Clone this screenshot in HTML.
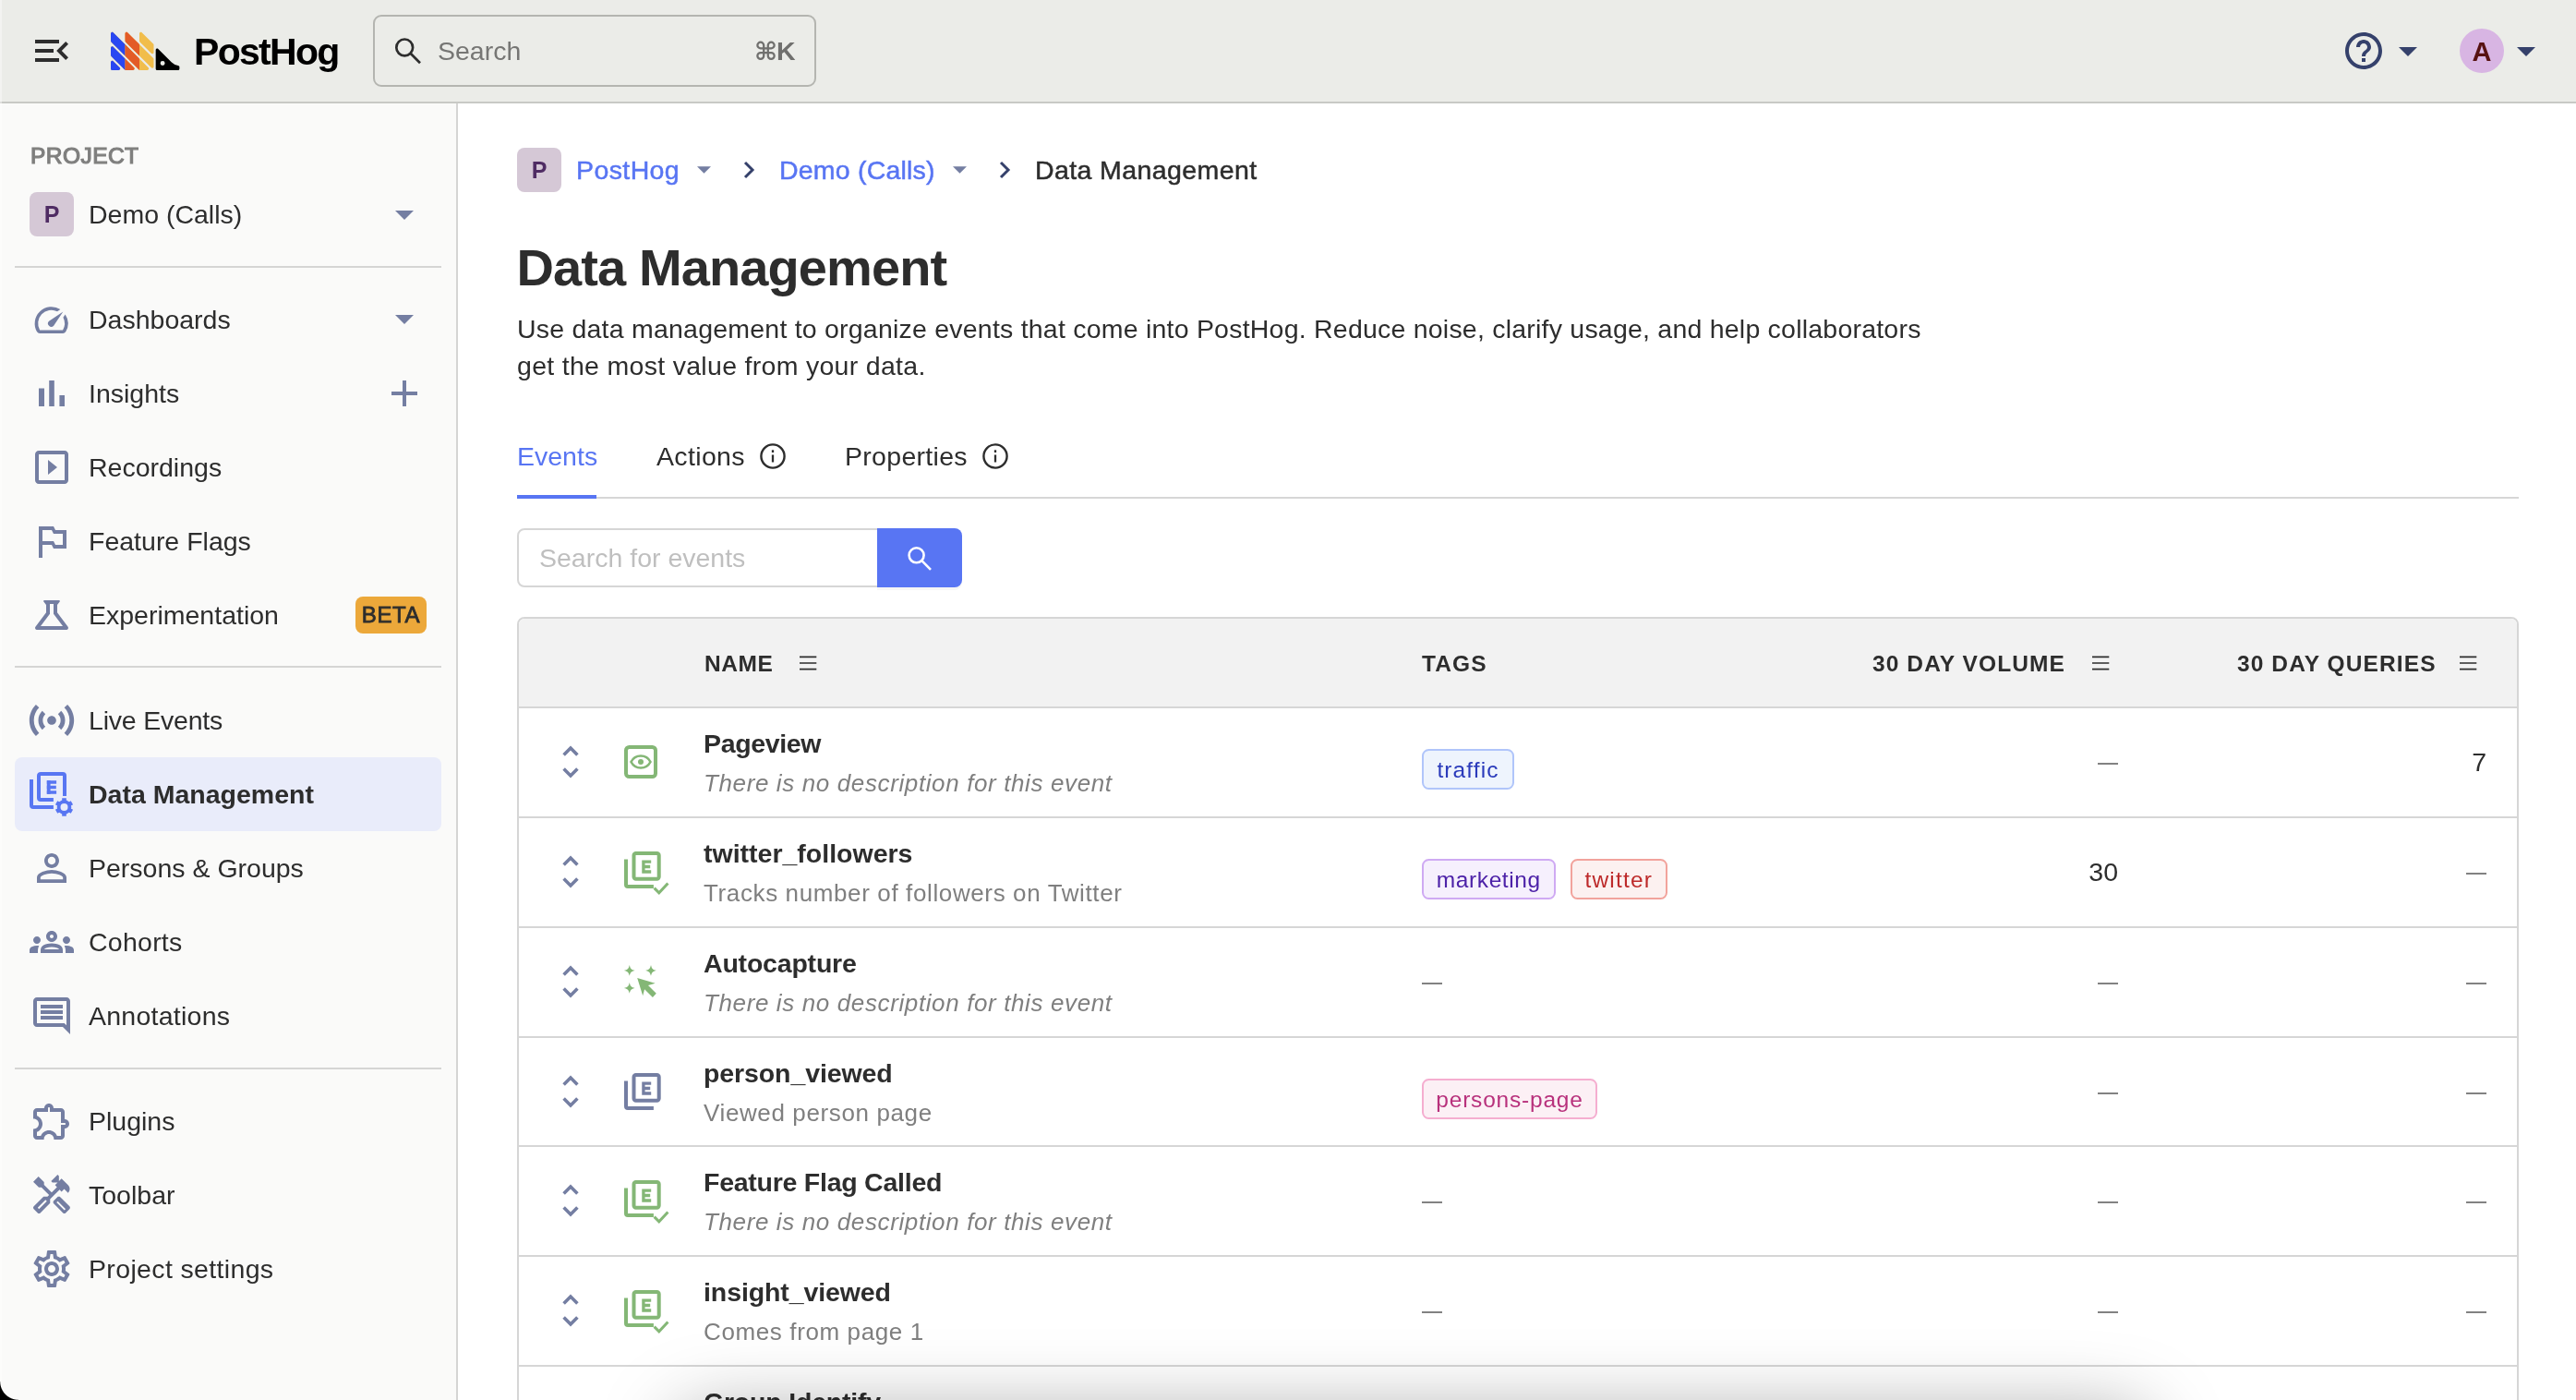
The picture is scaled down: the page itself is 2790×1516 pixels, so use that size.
<!DOCTYPE html>
<html lang="en">
<head>
<meta charset="utf-8">
<title>Data Management • PostHog</title>
<style>
*{box-sizing:border-box;margin:0;padding:0}
html,body{width:2790px;height:1516px;overflow:hidden;background:#fff}
body{position:relative;font-family:"Liberation Sans",Arial,sans-serif;font-size:28.5px;color:#2d2d2d;-webkit-font-smoothing:antialiased}
.abs{position:absolute}
.t{position:absolute;white-space:nowrap;line-height:40px;height:40px;letter-spacing:0}
svg{position:absolute;overflow:visible}
/* header */
#hdr{position:absolute;left:0;top:0;width:2790px;height:112px;background:#ebece8;border-bottom:2px solid #c8c9c5}
#search{position:absolute;left:404px;top:16px;width:480px;height:78px;border:2px solid #b4b5b0;border-radius:9px}
/* sidebar */
#side{position:absolute;left:0;top:112px;width:496px;height:1404px;background:#fafaf9;border-right:2px solid #d5d5d4}
.hr{position:absolute;left:16px;width:462px;height:2px;background:#d5d5d4}
.nav{position:absolute;left:96px;white-space:nowrap;line-height:40px;height:40px;letter-spacing:0}
.sq{position:absolute;width:48px;height:48px;border-radius:8px;background:#d5c8d6;color:#4f2c63;font-weight:700;font-size:25px;line-height:48px;text-align:center}
/* main */
.link{color:#5875f3}
.hrow{position:absolute;left:560px;width:2168px}
#tbl{position:absolute;left:560px;top:668px;width:2168px;height:900px;border:2px solid #d6d6d6;border-radius:8px;background:#fff;overflow:hidden}
#thead{position:absolute;left:0;top:0;width:100%;height:96px;background:#f2f2f2;border-bottom:2px solid #d6d6d6}
.th{position:absolute;top:27px;font-weight:700;font-size:24.5px;letter-spacing:1.1px;line-height:44px;white-space:nowrap;color:#2d2d2d}
.row{position:absolute;left:0;width:100%;height:119px;border-bottom:2px solid #d6d6d6}
.nm{position:absolute;left:200px;top:18px;font-weight:700;line-height:40px;white-space:nowrap;letter-spacing:-.35px}
.ds{position:absolute;left:200px;top:61px;font-size:26px;line-height:40px;white-space:nowrap;color:#7f7f7f;letter-spacing:.62px}
.ds.i{font-style:italic}
.num{position:absolute;line-height:40px;top:38px;text-align:right;white-space:nowrap}
.dash{position:absolute;height:2px;width:22px;background:#828282;top:59px}
.tag{position:absolute;top:44px;height:44px;border:2px solid;border-radius:7.5px;font-size:24.5px;line-height:41px;padding:0;text-align:center;white-space:nowrap;letter-spacing:1px}
.geekblue{color:#2b3bbb;background:#eef4fd;border-color:#b0c5fa}
.purple{color:#4d22a8;background:#f6f0fd;border-color:#cfaaf3}
.red{color:#bd2a2a;background:#fcf1f0;border-color:#f2a39c}
.magenta{color:#b8317c;background:#fcf0f5;border-color:#f5aed0}
</style>
</head>
<body>

<!-- ===================== HEADER ===================== -->
<div id="hdr"></div>
<div id="hdrin" class="abs" style="left:0;top:0;width:2790px;height:112px;will-change:transform">
  <!-- menu toggle -->
  <svg style="left:32px;top:31px" width="48" height="48" viewBox="0 0 24 24" fill="#2d2d2d"><path d="M3 18h13v-2H3v2zm0-5h10v-2H3v2zm0-7v2h13V6H3zm18 9.59L17.42 12 21 8.41 19.59 7l-5 5 5 5L21 15.59z"/></svg>
  <!-- logo mark -->
  <svg id="logo" style="left:119.5px;top:31px" width="77.5" height="46.5" viewBox="0 0 50 30" fill="none">
    <path fill="#f1bd4b" d="M0 8.58V3.41c0-.89 1.08-1.34 1.71-.7l24.58 24.58c.63.63.18 1.7-.71 1.7h-5.17c-.26 0-.52-.1-.7-.29L.29 9.29A1 1 0 0 1 0 8.58zM0 18.58v-5.17c0-.89 1.08-1.34 1.71-.7l14.58 14.58c.63.63.18 1.7-.71 1.7h-5.17c-.26 0-.52-.1-.7-.29L.29 19.29A1 1 0 0 1 0 18.58zM0 23.41c0-.89 1.08-1.34 1.71-.71l4.58 4.59c.63.63.18 1.7-.71 1.7H1a1 1 0 0 1-1-1v-4.58zM10 8.58V3.41c0-.89 1.08-1.34 1.71-.7l17.99 17.99c.19.19.3.44.3.71v5.17c0 .89-1.08 1.33-1.71.7L10.29 9.29a1 1 0 0 1-.29-.71zM21.7 2.71c-.63-.63-1.7-.19-1.7.7v5.17c0 .27.1.52.29.71l8 8c.63.63 1.71.18 1.71-.71v-5.17c0-.26-.11-.52-.3-.7l-8-8z"/>
    <path fill="#000" d="M42.52 23.53l-9.41-9.41c-.63-.63-1.71-.18-1.71.71v13.16a1 1 0 0 0 1 1h14.58a1 1 0 0 0 1-1v-1.2c0-.55-.45-.99-1-1.06a7.74 7.74 0 0 1-4.46-2.2zm-6.32 2.26a1.6 1.6 0 1 1 0-3.2 1.6 1.6 0 0 1 0 3.2z"/>
    <path fill="#2947f2" d="M0 27.99a1 1 0 0 0 1 1h4.58c.89 0 1.34-1.07.71-1.7l-4.58-4.59C1.08 22.07 0 22.52 0 23.41v4.58zM10 11L1.71 2.71C1.08 2.08 0 2.520 0 3.41v5.170c0 .27.11.52.29.71L10 18.99V11zM1.71 12.700C1.080 12.070 0 12.520 0 13.410v5.170c0 .270.110.520.290.710L10 28.990v-8L1.71 12.700z"/>
    <path fill="#e35b27" d="M19.99 11.41c0-.26-.1-.52-.29-.7l-8-8c-.63-.63-1.7-.19-1.7.7v5.17c0 .27.1.52.29.71l9.700 9.700v-7.580zM10 28.990h5.580c.89 0 1.340-1.070.710-1.700L10 20.990v8zM10 11v7.580c0 .270.1.520.29.710l9.700 9.700v-7.580c0-.270-.1-.520-.29-.710L10 11z"/>
  </svg>
  <div class="abs" id="wordmark" style="left:210px;top:31px;height:50px;line-height:50px;font-size:41px;font-weight:700;color:#000;letter-spacing:-1.7px;white-space:nowrap">PostHog</div>
  <!-- search -->
  <div id="search"></div>
  <svg style="left:424px;top:38px" width="36" height="36" viewBox="0 0 36 36" fill="none" stroke="#2d2d2d" stroke-width="2.700"><circle cx="14.2" cy="13.4" r="8.900"/><path d="M20.6 19.8L31 30.2" stroke-linecap="butt"/></svg>
  <div class="t" style="left:474px;top:35px;color:#767674">Search</div>
  <div class="t" style="left:817px;top:35px;color:#70706e;letter-spacing:0;font-weight:700"><span style="font-family:'DejaVu Sans',sans-serif;font-size:27px;font-weight:700;letter-spacing:-1px">⌘</span>K</div>
  <!-- help -->
  <svg style="left:2536px;top:31px" width="48" height="48" viewBox="0 0 24 24" fill="#35416b"><path d="M11 18h2v-2h-2v2zm1-16C6.48 2 2 6.48 2 12s4.48 10 10 10 10-4.48 10-10S17.52 2 12 2zm0 18c-4.41 0-8-3.59-8-8s3.59-8 8-8 8 3.59 8 8-3.59 8-8 8zm0-14c-2.21 0-4 1.79-4 4h2c0-1.1.9-2 2-2s2 .9 2 2c0 2-3 1.750-3 5h2c0-2.250 3-2.500 3-5 0-2.210-1.790-4-4-4z"/></svg>
  <svg style="left:2598px;top:51px" width="20" height="10" viewBox="0 0 20 10" fill="#35416b"><path d="M0 0h20L10 10z"/></svg>
  <div class="abs" style="left:2664px;top:31px;width:48px;height:48px;border-radius:50%;background:#d8b5e3;color:#571212;font-weight:700;font-size:29px;line-height:50px;text-align:center">A</div>
  <svg style="left:2726px;top:51px" width="20" height="10" viewBox="0 0 20 10" fill="#35416b"><path d="M0 0h20L10 10z"/></svg>
</div>

<!-- ===================== SIDEBAR ===================== -->
<div id="side" style="top:112px"></div>
<div id="sidein" class="abs" style="left:0;top:0;width:496px;height:1516px;will-change:transform">
  <div class="abs" style="left:33px;top:151px;height:36px;line-height:36px;font-size:24.5px;font-weight:400;-webkit-text-stroke:1.2px #7f7f7e;letter-spacing:.45px;color:#7f7f7e;white-space:nowrap">PROJECT</div>
  <div class="sq" style="left:32px;top:208px">P</div>
  <div class="nav" style="top:212px">Demo (Calls)</div>
  <svg style="left:428px;top:228px" width="20" height="10" viewBox="0 0 20 10" fill="#747ea2"><path d="M0 0h20L10 10z"/></svg>
  <div class="hr" style="top:288px"></div>

  <!-- Dashboards -->
  <svg style="left:34.4px;top:324.8px" width="43.2" height="43.2" viewBox="0 0 24 24" fill="#747ea2"><path d="M20.38 8.57l-1.23 1.85a8 8 0 0 1-.22 7.58H5.07A8 8 0 0 1 15.58 6.85l1.85-1.23A10 10 0 0 0 3.35 19a2 2 0 0 0 1.72 1h13.85a2 2 0 0 0 1.74-1 10 10 0 0 0-.27-10.44zm-9.79 6.84a2 2 0 0 0 2.83 0l5.66-8.49-8.49 5.66a2 2 0 0 0 0 2.83z"/></svg>
  <div class="nav" style="top:326px">Dashboards</div>
  <svg style="left:428px;top:341px" width="20" height="10" viewBox="0 0 20 10" fill="#747ea2"><path d="M0 0h20L10 10z"/></svg>
  <!-- Insights -->
  <svg style="left:32px;top:402px" width="48" height="48" viewBox="0 0 24 24" fill="#747ea2"><path d="M5 9.2h3V19H5zM10.6 5h2.8v14h-2.8zm5.6 8H19v6h-2.8z"/></svg>
  <div class="nav" style="top:406px">Insights</div>
  <svg style="left:414px;top:402px" width="48" height="48" viewBox="0 0 24 24" fill="#747ea2"><path d="M19 13h-6v6h-2v-6H5v-2h6V5h2v6h6v2z"/></svg>
  <!-- Recordings -->
  <svg style="left:32px;top:482px" width="48" height="48" viewBox="0 0 24 24" fill="#747ea2"><path d="M10 8v8l5-4-5-4zm9-5H5c-1.100 0-2 .9-2 2v14c0 1.100.9 2 2 2h14c1.100 0 2-.9 2-2V5c0-1.100-.9-2-2-2zm0 16H5V5h14v14z"/></svg>
  <div class="nav" style="top:486px">Recordings</div>
  <!-- Feature Flags -->
  <svg style="left:32px;top:562px" width="48" height="48" viewBox="0 0 24 24" fill="#747ea2"><path d="M14 6l-1-2H5v17h2v-7h5l1 2h7V6h-6zm4 8h-4l-1-2H7V6h5l1 2h5v6z"/></svg>
  <div class="nav" style="top:566px">Feature Flags</div>
  <!-- Experimentation -->
  <svg style="left:32px;top:642px" width="48" height="48" viewBox="0 0 24 24" fill="#747ea2"><path d="M13 11.330L18 18H6l5-6.670V6h2m2.960-2H8.040c-.42 0-.65.48-.39.81L9 6.500v4.170L3.200 18.400c-.49.66-.02 1.600.8 1.600h16c.82 0 1.290-.94.8-1.600L15 10.670V6.500l1.350-1.690c.26-.33.03-.81-.39-.81z"/></svg>
  <div class="nav" style="top:646px">Experimentation</div>
  <div class="abs" style="left:385px;top:646px;width:77px;height:40px;border-radius:8px;background:#eca83a;color:#2d2d2d;font-weight:400;-webkit-text-stroke:.8px #2d2d2d;font-size:24px;line-height:40px;text-align:center;letter-spacing:.6px">BETA</div>
  <div class="hr" style="top:721px"></div>

  <!-- Live Events -->
  <svg style="left:27px;top:751px" width="58" height="58" viewBox="0 0 24 24" fill="#747ea2"><path d="M7.760 16.240C6.670 15.160 6 13.660 6 12s.67-3.160 1.760-4.240l1.420 1.420C8.450 9.900 8 10.900 8 12c0 1.100.45 2.100 1.170 2.830l-1.410 1.410zm8.480 0C17.330 15.160 18 13.660 18 12s-.67-3.160-1.760-4.240l-1.420 1.420C15.550 9.900 16 10.900 16 12c0 1.100-.45 2.100-1.170 2.830l1.410 1.410zM12 10c-1.100 0-2 .9-2 2s.9 2 2 2 2-.9 2-2-.9-2-2-2zm8 2c0 2.210-.9 4.210-2.350 5.650l1.420 1.420C20.880 17.260 22 14.760 22 12s-1.120-5.260-2.930-7.070l-1.420 1.420C19.100 7.790 20 9.790 20 12zM6.350 6.350L4.930 4.930C3.120 6.740 2 9.240 2 12s1.120 5.260 2.930 7.070l1.420-1.420C4.900 16.210 4 14.210 4 12s.9-4.210 2.350-5.650z"/></svg>
  <div class="nav" style="top:760px;letter-spacing:-.2px">Live Events</div>
  <!-- Data Management (active) -->
  <div class="abs" style="left:16px;top:820px;width:462px;height:80px;border-radius:8px;background:#e9ecfa"></div>
  <svg style="left:31px;top:835px" width="50" height="50" viewBox="0 0 25 25" fill="none" stroke="#5876f2" stroke-width="2"><path d="M1.5 4.500V18.500a1 1 0 0 0 1 1H13.450"/><path d="M19.500 13.500V2.450a1 1 0 0 0-1-1H6.500a1 1 0 0 0-1 1V14.450a1 1 0 0 0 1 1H13.450"/><path d="M10.850 5.100V12.400" stroke-width="1.900"/><path d="M9.900 5.980H15.050M9.900 8.750H14.900M9.900 11.520H15.050" stroke-width="1.750"/><circle cx="19.250" cy="19.500" r="2.950" stroke-width="1.900"/><path d="M19.25 16.20L19.25 14.65M16.39 17.85L15.05 17.07M16.39 21.15L15.05 21.93M19.25 22.80L19.25 24.35M22.11 21.15L23.45 21.93M22.11 17.85L23.45 17.07" stroke-width="2.300"/></svg>
  <div class="nav" style="top:840px;font-weight:700;letter-spacing:0">Data Management</div>
  <!-- Persons & Groups -->
  <svg style="left:32px;top:916px" width="48" height="48" viewBox="0 0 24 24" fill="#747ea2"><path d="M12 5.900c1.160 0 2.100.94 2.100 2.100s-.94 2.100-2.100 2.100S9.900 9.160 9.900 8s.94-2.100 2.100-2.100m0 9c2.970 0 6.100 1.460 6.100 2.100v1.100H5.900V17c0-.64 3.130-2.100 6.100-2.100M12 4C9.790 4 8 5.790 8 8s1.790 4 4 4 4-1.790 4-4-1.790-4-4-4zm0 9c-2.670 0-8 1.340-8 4v3h16v-3c0-2.660-5.330-4-8-4z"/></svg>
  <div class="nav" style="top:920px">Persons &amp; Groups</div>
  <!-- Cohorts -->
  <svg style="left:32px;top:996px" width="48" height="48" viewBox="0 0 24 24" fill="#747ea2"><path d="M4 13c1.100 0 2-.9 2-2s-.9-2-2-2-2 .9-2 2 .9 2 2 2zm1.130 1.100c-.37-.06-.74-.1-1.130-.1-.99 0-1.930.21-2.780.58C.48 14.900 0 15.620 0 16.430V18h4.500v-1.610c0-.83.23-1.610.63-2.290zM20 13c1.100 0 2-.9 2-2s-.9-2-2-2-2 .9-2 2 .9 2 2 2zm4 3.430c0-.81-.48-1.530-1.220-1.850-.85-.37-1.790-.58-2.780-.58-.39 0-.76.04-1.130.1.4.68.63 1.460.63 2.290V18H24v-1.570zm-7.760-2.780c-1.170-.52-2.610-.9-4.240-.9-1.630 0-3.070.39-4.240.9C6.680 14.130 6 15.210 6 16.390V18h12v-1.610c0-1.180-.68-2.260-1.760-2.740zM8.070 16c.09-.23.13-.39.91-.69.97-.38 1.990-.56 3.020-.56s2.050.18 3.020.56c.77.3.81.46.91.69H8.070zM12 8c.55 0 1 .45 1 1s-.45 1-1 1-1-.45-1-1 .45-1 1-1m0-2c-1.660 0-3 1.340-3 3s1.340 3 3 3 3-1.340 3-3-1.340-3-3-3z"/></svg>
  <div class="nav" style="top:1000px;letter-spacing:.25px">Cohorts</div>
  <!-- Annotations -->
  <svg style="left:32px;top:1076px" width="48" height="48" viewBox="0 0 24 24" fill="#747ea2"><path d="M21.990 4c0-1.100-.89-2-1.990-2H4c-1.100 0-2 .9-2 2v12c0 1.100.9 2 2 2h14l4 4-.01-18zM20 4v13.170L18.830 16H4V4h16zM6 12h12v2H6zm0-3h12v2H6zm0-3h12v2H6z"/></svg>
  <div class="nav" style="top:1080px;letter-spacing:.25px">Annotations</div>
  <div class="hr" style="top:1156px"></div>

  <!-- Plugins -->
  <svg style="left:32px;top:1190px" width="48" height="48" viewBox="0 0 24 24" fill="#747ea2"><path d="M10.500 4.500c.28 0 .5.22.5.5v2h6v6h2c.28 0 .5.22.5.5s-.22.5-.5.5h-2v6h-2.120c-.68-1.750-2.390-3-4.380-3s-3.700 1.250-4.380 3H4v-2.120c1.750-.68 3-2.390 3-4.380 0-1.990-1.240-3.700-2.990-4.380L4 7h6V5c0-.28.22-.5.5-.5m0-2C9.120 2.500 8 3.620 8 5H4c-1.100 0-1.990.9-1.990 2v3.800h.29c1.490 0 2.700 1.210 2.700 2.700s-1.210 2.700-2.700 2.700H2V20c0 1.100.9 2 2 2h3.800v-.3c0-1.490 1.210-2.700 2.700-2.700s2.700 1.210 2.700 2.700v.3H17c1.100 0 2-.9 2-2v-4c1.380 0 2.500-1.120 2.500-2.500S20.380 11 19 11V7c0-1.100-.9-2-2-2h-4c0-1.380-1.120-2.500-2.500-2.500z"/></svg>
  <div class="nav" style="top:1194px">Plugins</div>
  <!-- Toolbar -->
  <svg id="ictool" style="left:32px;top:1270px" width="48" height="48" viewBox="0 0 24 24" fill="#747ea2"><path d="M21.670 18.170l-5.300-5.300h-.99l-2.540 2.540v.99l5.300 5.300c.39.39 1.020.39 1.410 0l2.120-2.120c.39-.38.39-1.020 0-1.410zm-2.830 2.120l-4.240-4.240.71-.71 4.240 4.240-.71.710z"/><path d="M17.340 10.190l1.410-1.410 2.120 2.120c1.170-1.170 1.170-3.070 0-4.240l-3.540-3.540-1.410 1.410V1.710l-.7-.71-3.540 3.540.71.710h2.830l-1.410 1.410 1.060 1.060-2.890 2.890-4.130-4.130V5.060L4.830 2.040 2 4.870l3.030 3.030h1.410l4.130 4.130-.85.85H7.600l-5.300 5.300c-.39.39-.39 1.020 0 1.410l2.120 2.120c.39.39 1.020.39 1.410 0l5.300-5.300v-2.120l5.150-5.150 1.060 1.050zm-7.980 5.150l-4.240 4.240-.71-.71 4.240-4.240.71.710z"/></svg>
  <div class="nav" style="top:1274px">Toolbar</div>
  <!-- Project settings -->
  <svg style="left:32px;top:1350px" width="48" height="48" viewBox="0 0 24 24" fill="#747ea2"><path d="M19.430 12.980c.04-.32.07-.64.07-.98 0-.34-.03-.66-.07-.98l2.110-1.650c.19-.15.24-.42.12-.64l-2-3.460c-.09-.16-.26-.25-.44-.25-.06 0-.12.01-.17.03l-2.490 1c-.52-.4-1.080-.73-1.690-.98l-.38-2.650C14.460 2.180 14.250 2 14 2h-4c-.25 0-.46.18-.49.42l-.38 2.650c-.61.25-1.170.59-1.690.98l-2.490-1c-.06-.02-.12-.03-.18-.03-.17 0-.34.09-.43.25l-2 3.460c-.13.22-.07.49.12.64l2.110 1.650c-.04.32-.07.65-.07.98 0 .33.03.66.07.98l-2.110 1.650c-.19.15-.24.42-.12.64l2 3.460c.09.16.26.25.44.25.06 0 .12-.01.17-.03l2.490-1c.52.4 1.080.73 1.690.98l.38 2.650c.03.24.24.42.49.42h4c.25 0 .46-.18.49-.42l.38-2.650c.61-.25 1.170-.59 1.690-.98l2.490 1c.06.02.12.03.18.03.17 0 .34-.09.43-.25l2-3.460c.12-.22.07-.49-.12-.64l-2.110-1.650zm-1.980-1.710c.04.31.05.52.05.73 0 .21-.02.43-.05.73l-.14 1.130.89.7 1.080.84-.7 1.210-1.270-.51-1.040-.42-.9.68c-.43.32-.84.56-1.250.73l-1.060.43-.16 1.130-.2 1.350h-1.400l-.19-1.350-.16-1.130-1.060-.43c-.43-.18-.83-.41-1.230-.71l-.91-.7-1.060.43-1.270.51-.7-1.210 1.080-.84.89-.7-.14-1.130c-.03-.31-.05-.54-.05-.74s.02-.43.05-.73l.14-1.130-.89-.7-1.080-.84.7-1.210 1.270.51 1.040.42.9-.68c.43-.32.84-.56 1.250-.73l1.060-.43.16-1.130.2-1.350h1.390l.19 1.350.16 1.130 1.060.43c.43.18.83.41 1.230.71l.91.7 1.060-.43 1.270-.51.7 1.210-1.070.85-.89.7.14 1.130zM12 8c-2.210 0-4 1.790-4 4s1.790 4 4 4 4-1.790 4-4-1.790-4-4-4zm0 6c-1.100 0-2-.9-2-2s.9-2 2-2 2 .9 2 2-.9 2-2 2z"/></svg>
  <div class="nav" style="top:1354px;letter-spacing:.35px">Project settings</div>
  <!-- window edge highlight + corner -->
  <div class="abs" style="left:0;top:0;width:2px;height:1516px;background:rgba(255,255,255,.4)"></div>
  <div class="abs" style="left:0;top:1496px;width:20px;height:20px;background:radial-gradient(circle at 100% 0,rgba(0,0,0,0) 19.3px,#000 20.3px)"></div>
</div>

<!-- ===================== MAIN ===================== -->
<div id="main" style="will-change:transform">
  <!-- breadcrumbs -->
  <div class="sq" style="left:560px;top:160px">P</div>
  <div class="t link" style="left:624px;top:164px;letter-spacing:.4px;-webkit-text-stroke:.5px #5875f3">PostHog</div>
  <svg style="left:755px;top:180px" width="15" height="8" viewBox="0 0 20 10" fill="#747ea2"><path d="M0 0h20L10 10z"/></svg>
  <svg style="left:805px;top:174px" width="13" height="20" viewBox="0 0 13 20" fill="none" stroke="#35416b" stroke-width="3"><path d="M2 2l8 8-8 8"/></svg>
  <div class="t link" style="left:844px;top:164px;letter-spacing:.2px;-webkit-text-stroke:.5px #5875f3">Demo (Calls)</div>
  <svg style="left:1032px;top:180px" width="15" height="8" viewBox="0 0 20 10" fill="#747ea2"><path d="M0 0h20L10 10z"/></svg>
  <svg style="left:1082px;top:174px" width="13" height="20" viewBox="0 0 13 20" fill="none" stroke="#35416b" stroke-width="3"><path d="M2 2l8 8-8 8"/></svg>
  <div class="t" style="left:1121px;top:164px;letter-spacing:.4px;-webkit-text-stroke:.5px #2d2d2d">Data Management</div>

  <!-- title -->
  <div class="abs" id="title" style="left:559.5px;top:258px;height:64px;line-height:64px;font-size:56px;font-weight:700;letter-spacing:-.9px;white-space:nowrap">Data Management</div>
  <div class="t" id="d1" style="left:560px;top:336px;letter-spacing:.22px">Use data management to organize events that come into PostHog. Reduce noise, clarify usage, and help collaborators</div>
  <div class="t" id="d2" style="left:560px;top:376px;letter-spacing:.3px">get the most value from your data.</div>

  <!-- tabs -->
  <div class="t link" style="left:560px;top:474px">Events</div>
  <div class="t" style="left:711px;top:474px;letter-spacing:.35px">Actions</div>
  <svg style="left:822px;top:479px" width="30" height="30" viewBox="0 0 30 30" fill="none" stroke="#2d2d2d" stroke-width="2.400"><circle cx="15" cy="15" r="12.600"/><path d="M15 13.500v8" stroke-width="2.300"/><path d="M15 8.300v2.700" stroke-width="2.300"/></svg>
  <div class="t" style="left:915px;top:474px;letter-spacing:.3px">Properties</div>
  <svg style="left:1063px;top:479px" width="30" height="30" viewBox="0 0 30 30" fill="none" stroke="#2d2d2d" stroke-width="2.400"><circle cx="15" cy="15" r="12.600"/><path d="M15 13.500v8" stroke-width="2.300"/><path d="M15 8.300v2.700" stroke-width="2.300"/></svg>
  <div class="abs" style="left:560px;top:538px;width:2168px;height:2px;background:#d6d6d6"></div>
  <div class="abs" style="left:560px;top:536px;width:86px;height:4px;background:#5875f3"></div>

  <!-- search for events -->
  <div class="abs" style="left:560px;top:572px;width:392px;height:64px;border:2px solid #d6d6d6;border-radius:8px 0 0 8px;background:#fff"></div>
  <div class="t" style="left:584px;top:584px;color:#bfbfbf">Search for events</div>
  <div class="abs" style="left:950px;top:572px;width:92px;height:64px;background:#5875f3;border-radius:0 8px 8px 0;box-shadow:0 3px 0 rgba(0,0,0,.035)"></div>
  <svg style="left:981px;top:590px" width="30" height="30" viewBox="0 0 30 30" fill="none" stroke="#fff" stroke-width="2.600"><circle cx="11.600" cy="11.300" r="8"/><path d="M17.400 17.200L27 26.800"/></svg>

  <!-- table -->
  <div id="tbl">
    <div id="thead" style="height:97px">
      <div class="th" style="left:201px;letter-spacing:.6px">NAME</div>
      <svg style="left:303.9px;top:40px" width="19" height="16" viewBox="0 0 19 16" fill="#2d2d2d"><path d="M0 .45h18.300v1.700H0zM0 7.150h18.300v1.700H0zM0 13.850h18.300v1.700H0z"/></svg>
      <div class="th" style="left:978px">TAGS</div>
      <div class="th" style="left:1466px">30 DAY VOLUME</div>
      <svg style="left:1703.8px;top:40px" width="19" height="16" viewBox="0 0 19 16" fill="#2d2d2d"><path d="M0 .45h18.300v1.700H0zM0 7.150h18.300v1.700H0zM0 13.850h18.300v1.700H0z"/></svg>
      <div class="th" style="left:1861px">30 DAY QUERIES</div>
      <svg style="left:2102.4px;top:40px" width="19" height="16" viewBox="0 0 19 16" fill="#2d2d2d"><path d="M0 .45h18.300v1.700H0zM0 7.150h18.300v1.700H0zM0 13.850h18.300v1.700H0z"/></svg>
    </div>
    <!--ROWS-->
    <div class="row" style="top:97px;height:119px">
      <svg style="left:44px;top:36px" width="24" height="46" viewBox="0 0 24 46" fill="none" stroke="#747ea2" stroke-width="3.6"><path d="M4.6 14.500L12 7.100l7.400 7.400"/><path d="M4.6 29.500L12 36.900l7.400-7.400"/></svg>
      <svg style="left:114px;top:40px" width="36" height="36" viewBox="0 0 36 36" fill="none" stroke="#84b776" stroke-width="4"><rect x="2" y="2" width="32" height="32" rx="3.500"/><path d="M7.500 18c2.200-4.300 6-6.500 10.500-6.500s8.300 2.200 10.500 6.500c-2.200 4.300-6 6.500-10.500 6.500S9.700 22.300 7.500 18z" stroke-width="2.600"/><circle cx="18" cy="18" r="3" fill="#84b776" stroke="none"/></svg>
      <div class="nm" style="letter-spacing:-0.35px">Pageview</div>
      <div class="ds i">There is no description for this event</div>
      <div class="tag geekblue" style="left:978px;width:100px;letter-spacing:1.1px">traffic</div>
      <div class="dash" style="left:1710px"></div>
      <div class="num" style="right:33px">7</div>
      </div>
    <div class="row" style="top:216px;height:119px">
      <svg style="left:44px;top:36px" width="24" height="46" viewBox="0 0 24 46" fill="none" stroke="#747ea2" stroke-width="3.6"><path d="M4.6 14.500L12 7.100l7.400 7.400"/><path d="M4.6 29.500L12 36.900l7.400-7.400"/></svg>
      <svg style="left:114px;top:35px" width="50" height="48" viewBox="0 0 50 48" fill="none" stroke="#84b776" stroke-width="4"><rect x="10.500" y="3.100" width="27.200" height="27.700" rx="2.200"/><path d="M2 9.500v27.400a2 2 0 0 0 2 2h27.900"/><path d="M29.200 12.100h-8.300v10.900h8.300M20.900 17.500h7.300" stroke-width="3.300"/><path d="M32.600 40.600l5.200 5.200 9.600-10.400" stroke-width="3"/></svg>
      <div class="nm" style="letter-spacing:0px">twitter_followers</div>
      <div class="ds">Tracks number of followers on Twitter</div>
      <div class="tag purple" style="left:978px;width:144.6px;letter-spacing:0.6px">marketing</div>
      <div class="tag red" style="left:1139px;width:104.6px;letter-spacing:1.2px">twitter</div>
      <div class="num" style="right:432px">30</div>
      <div class="dash" style="left:2109px"></div>
      </div>
    <div class="row" style="top:335px;height:119px">
      <svg style="left:44px;top:36px" width="24" height="46" viewBox="0 0 24 46" fill="none" stroke="#747ea2" stroke-width="3.6"><path d="M4.6 14.500L12 7.100l7.400 7.400"/><path d="M4.6 29.500L12 36.900l7.400-7.400"/></svg>
      <svg style="left:112px;top:36px" width="40" height="42" viewBox="0 0 40 42" fill="#84b776" stroke="none"><path transform="translate(7.800 9.900)" d="M0-5.900C.9-1.900 1.900-.9 5.900 0 1.900.9.9 1.900 0 5.900-.9 1.900-1.900.9-5.900 0-1.900-.9-.9-1.900 0-5.900z"/><path transform="translate(31 9.900)" d="M0-5.900C.9-1.900 1.900-.9 5.900 0 1.900.9.9 1.900 0 5.900-.9 1.900-1.900.9-5.900 0-1.900-.9-.9-1.900 0-5.900z"/><path transform="translate(7.800 28.900)" d="M0-5.900C.9-1.900 1.900-.9 5.900 0 1.900.9.9 1.900 0 5.900-.9 1.900-1.900.9-5.900 0-1.900-.9-.9-1.900 0-5.900z"/><path d="M16.200 18L35.700 23.800 28 26.100 36.800 34.700 32.900 38.900 24.100 30.300 22.200 37.300z"/></svg>
      <div class="nm" style="letter-spacing:-0.2px">Autocapture</div>
      <div class="ds i">There is no description for this event</div>
      <div class="dash" style="left:978px"></div>
      <div class="dash" style="left:1710px"></div>
      <div class="dash" style="left:2109px"></div>
      </div>
    <div class="row" style="top:454px;height:118px">
      <svg style="left:44px;top:36px" width="24" height="46" viewBox="0 0 24 46" fill="none" stroke="#747ea2" stroke-width="3.6"><path d="M4.6 14.500L12 7.100l7.400 7.400"/><path d="M4.6 29.500L12 36.900l7.400-7.400"/></svg>
      <svg style="left:114px;top:37px" width="50" height="48" viewBox="0 0 50 48" fill="none" stroke="#747ea2" stroke-width="4"><rect x="10.500" y="3.100" width="27.200" height="27.700" rx="2.200"/><path d="M2 9.500v27.400a2 2 0 0 0 2 2h27.900"/><path d="M29.200 12.100h-8.300v10.900h8.300M20.900 17.500h7.300" stroke-width="3.300"/></svg>
      <div class="nm" style="letter-spacing:-0.1px">person_viewed</div>
      <div class="ds">Viewed person page</div>
      <div class="tag magenta" style="left:978px;width:190px;letter-spacing:0.8px">persons-page</div>
      <div class="dash" style="left:1710px"></div>
      <div class="dash" style="left:2109px"></div>
      </div>
    <div class="row" style="top:572px;height:119px">
      <svg style="left:44px;top:36px" width="24" height="46" viewBox="0 0 24 46" fill="none" stroke="#747ea2" stroke-width="3.6"><path d="M4.6 14.500L12 7.100l7.400 7.400"/><path d="M4.6 29.500L12 36.900l7.400-7.400"/></svg>
      <svg style="left:114px;top:35px" width="50" height="48" viewBox="0 0 50 48" fill="none" stroke="#84b776" stroke-width="4"><rect x="10.500" y="3.100" width="27.200" height="27.700" rx="2.200"/><path d="M2 9.500v27.400a2 2 0 0 0 2 2h27.900"/><path d="M29.200 12.100h-8.300v10.900h8.300M20.900 17.500h7.300" stroke-width="3.300"/><path d="M32.600 40.600l5.200 5.200 9.600-10.400" stroke-width="3"/></svg>
      <div class="nm" style="letter-spacing:-0.25px">Feature Flag Called</div>
      <div class="ds i">There is no description for this event</div>
      <div class="dash" style="left:978px"></div>
      <div class="dash" style="left:1710px"></div>
      <div class="dash" style="left:2109px"></div>
      </div>
    <div class="row" style="top:691px;height:119px">
      <svg style="left:44px;top:36px" width="24" height="46" viewBox="0 0 24 46" fill="none" stroke="#747ea2" stroke-width="3.6"><path d="M4.6 14.500L12 7.100l7.400 7.400"/><path d="M4.6 29.500L12 36.900l7.400-7.400"/></svg>
      <svg style="left:114px;top:35px" width="50" height="48" viewBox="0 0 50 48" fill="none" stroke="#84b776" stroke-width="4"><rect x="10.500" y="3.100" width="27.200" height="27.700" rx="2.200"/><path d="M2 9.500v27.400a2 2 0 0 0 2 2h27.900"/><path d="M29.200 12.100h-8.300v10.900h8.300M20.900 17.500h7.300" stroke-width="3.300"/><path d="M32.600 40.600l5.200 5.200 9.600-10.400" stroke-width="3"/></svg>
      <div class="nm" style="letter-spacing:-0.1px">insight_viewed</div>
      <div class="ds">Comes from page 1</div>
      <div class="dash" style="left:978px"></div>
      <div class="dash" style="left:1710px"></div>
      <div class="dash" style="left:2109px"></div>
      </div>
    <div class="row" style="top:810px;height:119px">
      <svg style="left:44px;top:36px" width="24" height="46" viewBox="0 0 24 46" fill="none" stroke="#747ea2" stroke-width="3.6"><path d="M4.6 14.500L12 7.100l7.400 7.400"/><path d="M4.6 29.500L12 36.900l7.400-7.400"/></svg>
      <svg style="left:114px;top:35px" width="50" height="48" viewBox="0 0 50 48" fill="none" stroke="#84b776" stroke-width="4"><rect x="10.500" y="3.100" width="27.200" height="27.700" rx="2.200"/><path d="M2 9.500v27.400a2 2 0 0 0 2 2h27.900"/><path d="M29.200 12.100h-8.300v10.900h8.300M20.900 17.500h7.300" stroke-width="3.300"/><path d="M32.600 40.600l5.200 5.200 9.600-10.400" stroke-width="3"/></svg>
      <div class="nm" style="letter-spacing:-0.2px">Group Identify</div>
      <div class="ds i">There is no description for this event</div>
      <div class="dash" style="left:978px"></div>
      <div class="dash" style="left:1710px"></div>
      <div class="dash" style="left:2109px"></div>
      </div>
    <!--/ROWS-->
  </div>
</div>

<!-- bottom shadow overlay -->
<div class="abs" style="left:735px;top:1532px;width:1590px;height:200px;border-radius:30px;box-shadow:0 0 84px 0 rgba(0,0,0,.36)"></div>

</body>
</html>
